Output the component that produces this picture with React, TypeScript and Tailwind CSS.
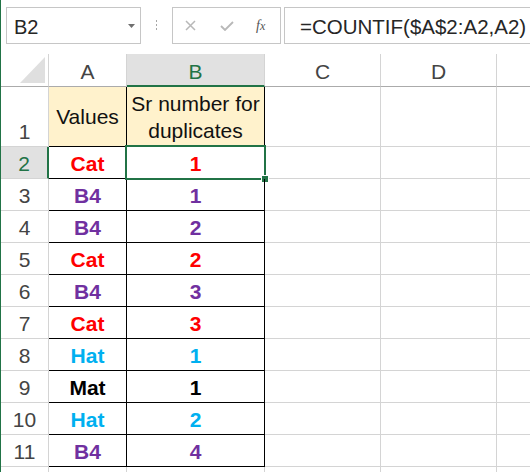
import React from 'react'

const GREEN = '#217346'

type Row = { value: string; count: string; color: string }

const rows: Row[] = [
  { value: 'Cat', count: '1', color: 'text-[#ff0000]' },
  { value: 'B4', count: '1', color: 'text-[#7030a0]' },
  { value: 'B4', count: '2', color: 'text-[#7030a0]' },
  { value: 'Cat', count: '2', color: 'text-[#ff0000]' },
  { value: 'B4', count: '3', color: 'text-[#7030a0]' },
  { value: 'Cat', count: '3', color: 'text-[#ff0000]' },
  { value: 'Hat', count: '1', color: 'text-[#00b0f0]' },
  { value: 'Mat', count: '1', color: 'text-black' },
  { value: 'Hat', count: '2', color: 'text-[#00b0f0]' },
  { value: 'B4', count: '4', color: 'text-[#7030a0]' },
]

function FormulaBar() {
  return (
    <div className="flex h-[54px] pt-[7px]">
      <div className="ml-[5px] flex h-[37px] w-[135px] shrink-0 items-center border border-[#c6c6c6] pl-[7px] pr-[5px] pt-[3px] text-[20px] leading-none text-[#262626]">
        <span className="flex-1">B2</span>
        <svg width="7" height="4" viewBox="0 0 7 4" className="mb-[2px]">
          <polygon points="0,0 7,0 3.5,4" fill="#6f6f6f" />
        </svg>
      </div>
      <div className="flex w-[31px] shrink-0 flex-col items-center gap-[2px] pt-[13px]">
        <span className="h-[2px] w-[1px] bg-[#a6a6a6]" />
        <span className="h-[2px] w-[1px] bg-[#a6a6a6]" />
        <span className="h-[2px] w-[1px] bg-[#a6a6a6]" />
      </div>
      <div className="flex h-[37px] w-[109px] shrink-0 items-center border border-[#c6c6c6]">
        <svg width="11" height="11" viewBox="0 0 11 11" className="ml-[12px]">
          <path d="M1 1 L10 10 M10 1 L1 10" stroke="#b8b8b8" strokeWidth="1.5" />
        </svg>
        <svg width="14" height="10" viewBox="0 0 14 10" className="ml-[24px]">
          <path d="M1 5 L5 9 L13 1" stroke="#b8b8b8" strokeWidth="1.8" fill="none" />
        </svg>
        <span className="ml-[22px] font-['Liberation_Serif',serif] text-[14px] italic leading-none text-[#555]">
          f<span className="text-[12px]">x</span>
        </span>
      </div>
      <div className="ml-[3px] flex h-[37px] w-[260px] shrink-0 items-center border border-[#c6c6c6] pl-[15px] pt-[4px] text-[20.5px] leading-none text-[#262626]">
        =COUNTIF($A$2:A2,A2)
      </div>
    </div>
  )
}

function ColHeader({ label, selected }: { label: string; selected?: boolean }) {
  return (
    <div
      className={
        selected
          ? 'flex items-center justify-center border-r border-b-2 border-r-[#d4d4d4] border-b-[#217346] bg-[#e1e1e1] pt-[3px] text-[#217346]'
          : 'flex items-center justify-center border-r border-b border-r-[#d4d4d4] border-b-[#ababab] pt-[3px] text-[#444]'
      }
    >
      {label}
    </div>
  )
}

export default function App() {
  return (
    <div className="h-[472px] w-[530px] overflow-hidden border-l border-[#217346] bg-white font-['Liberation_Sans',Arial,sans-serif]">
      <FormulaBar />
      <div className="grid grid-cols-[48px_78px_138px_116px_116px_1fr] grid-rows-[33px_60px_repeat(11,32px)] text-[21px] leading-none">
        {/* header row */}
        <div className="flex items-end justify-end border-r border-b border-r-[#d4d4d4] border-b-[#ababab] pr-[3px] pb-[3px]">
          <svg width="25" height="26" viewBox="0 0 25 26">
            <polygon points="25,0 25,26 0,26" fill="#dfdfdf" />
          </svg>
        </div>
        <ColHeader label="A" />
        <ColHeader label="B" selected />
        <ColHeader label="C" />
        <ColHeader label="D" />
        <div className="border-b border-[#ababab]" />

        {/* row 1 */}
        <div className="flex items-end justify-center border-r border-b border-[#d4d4d4] pb-[4px] text-[#444]">1</div>
        <div className="flex items-center justify-center border-r border-b border-black bg-[#fff2cc] text-[#111]">Values</div>
        <div className="flex items-center justify-center border-r border-b border-black bg-[#fff2cc] text-center leading-[27px] text-[#111]">
          Sr number for
          <br />
          duplicates
        </div>
        <div className="border-r border-b border-[#d4d4d4]" />
        <div className="border-r border-b border-[#d4d4d4]" />
        <div className="border-b border-[#d4d4d4]" />

        {rows.map((r, i) => {
          const selected = i === 0
          return (
            <React.Fragment key={i}>
              <div
                className={
                  selected
                    ? 'flex items-center justify-center border-r-2 border-b border-r-[#217346] border-b-[#d4d4d4] bg-[#e1e1e1] pt-[2px] text-[#217346]'
                    : 'flex items-center justify-center border-r border-b border-[#d4d4d4] pt-[2px] text-[#444]'
                }
              >
                {i + 2}
              </div>
              <div className={`flex items-center justify-center border-r border-b border-black pt-[2px] font-bold ${r.color}`}>
                {r.value}
              </div>
              <div className={`relative flex items-center justify-center border-r border-b border-black pt-[2px] font-bold ${r.color}`}>
                {r.count}
                {selected && (
                  <div className="absolute left-[-2px] top-[-2px] h-[35px] w-[141px] border-2" style={{ borderColor: GREEN }}>
                    <div className="absolute right-[-5px] bottom-[-5px] h-[8px] w-[8px] border border-white bg-[#217346]" />
                  </div>
                )}
              </div>
              <div className="border-r border-b border-[#d4d4d4]" />
              <div className="border-r border-b border-[#d4d4d4]" />
              <div className="border-b border-[#d4d4d4]" />
            </React.Fragment>
          )
        })}

        {/* row 12, only its top edge shows */}
        <div className="border-r border-[#d4d4d4]" />
        <div className="border-r border-[#d4d4d4]" />
        <div className="border-r border-[#d4d4d4]" />
        <div className="border-r border-[#d4d4d4]" />
        <div className="border-r border-[#d4d4d4]" />
        <div />
      </div>
    </div>
  )
}
